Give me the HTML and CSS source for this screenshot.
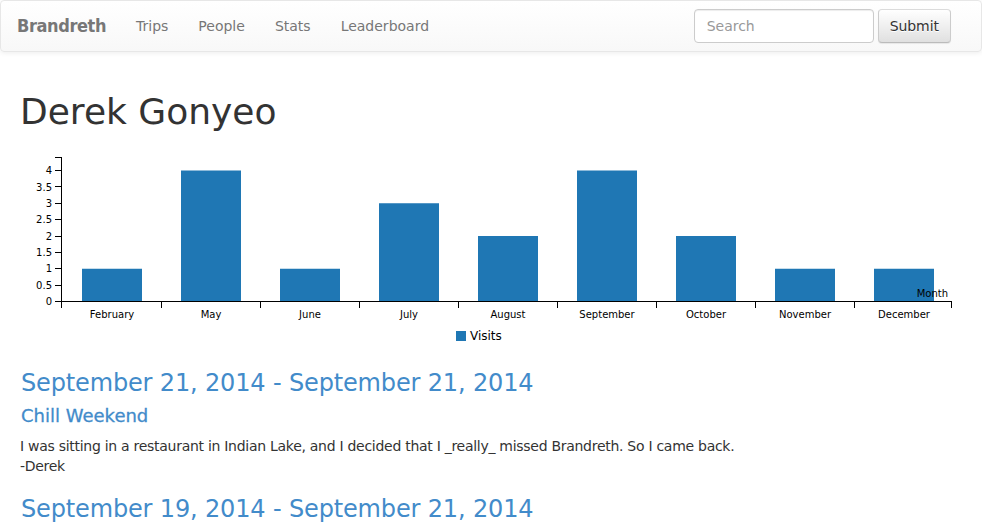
FILE: index.html
```html
<!DOCTYPE html>
<html>
<head>
<meta charset="utf-8">
<title>Derek Gonyeo</title>
<link rel="stylesheet" href="styles.css">
</head>
<body>
<nav class="navbar">
  <a class="brand" href="#">Brandreth</a>
  <ul class="nav">
    <li><a href="#">Trips</a></li>
    <li><a href="#">People</a></li>
    <li><a href="#">Stats</a></li>
    <li><a href="#">Leaderboard</a></li>
  </ul>
  <form class="search">
    <input class="search-input" type="text" placeholder="Search">
    <button class="btn" type="button">Submit</button>
  </form>
</nav>
<main class="content">
  <h1 class="title">Derek Gonyeo</h1>
  <svg class="chart" width="942" height="208" viewBox="0 0 942 208">
    <g class="bars" fill="#1f77b4">
      <rect x="62" y="126.75" width="60" height="32.75"/>
      <rect x="161" y="28.5" width="60" height="131"/>
      <rect x="260" y="126.75" width="60" height="32.75"/>
      <rect x="359" y="61.25" width="60" height="98.25"/>
      <rect x="458" y="94" width="60" height="65.5"/>
      <rect x="557" y="28.5" width="60" height="131"/>
      <rect x="656" y="94" width="60" height="65.5"/>
      <rect x="755" y="126.75" width="60" height="32.75"/>
      <rect x="854" y="126.75" width="60" height="32.75"/>
    </g>
    <g class="axis" stroke="#000" fill="none" shape-rendering="crispEdges">
      <path d="M35,15.5H41.5V159.5H35"/>
      <path d="M35,143.1H41M35,126.75H41M35,110.4H41M35,94H41M35,77.6H41M35,61.25H41M35,44.9H41M35,28.5H41"/>
      <path d="M41.5,166V159.5H931.5V166"/>
      <path d="M141.5,159.5V166M240.5,159.5V166M339.5,159.5V166M438.5,159.5V166M537.5,159.5V166M636.5,159.5V166M735.5,159.5V166M834.5,159.5V166"/>
    </g>
    <g class="ylabels" text-anchor="end">
      <text x="32" y="163">0</text>
      <text x="32" y="146.7">0.5</text>
      <text x="32" y="130.3">1</text>
      <text x="32" y="114">1.5</text>
      <text x="32" y="97.6">2</text>
      <text x="32" y="81.2">2.5</text>
      <text x="32" y="64.9">3</text>
      <text x="32" y="48.5">3.5</text>
      <text x="32" y="32.1">4</text>
    </g>
    <g class="xlabels" text-anchor="middle">
      <text x="92" y="176">February</text>
      <text x="191" y="176">May</text>
      <text x="290" y="176">June</text>
      <text x="389" y="176">July</text>
      <text x="488" y="176">August</text>
      <text x="587" y="176">September</text>
      <text x="686" y="176">October</text>
      <text x="785" y="176">November</text>
      <text x="884" y="176">December</text>
    </g>
    <text class="axis-title" x="928" y="155" text-anchor="end">Month</text>
    <rect x="436" y="189" width="10" height="10" fill="#1f77b4"/>
    <text class="legend" x="450" y="198">Visits</text>
  </svg>

  <h3 class="trip-date"><a href="#">September 21, 2014 - September 21, 2014</a></h3>
  <h4 class="trip-name"><a href="#">Chill Weekend</a></h4>
  <p class="trip-notes">I was sitting in a restaurant in Indian Lake, and I decided that I _really_ missed Brandreth. So I came back.<br>-Derek</p>

  <h3 class="trip-date"><a href="#">September 19, 2014 - September 21, 2014</a></h3>
</main>
</body>
</html>
```

FILE: styles.css
```css
html, body {
  margin: 0;
  padding: 0;
}
body {
  font-family: "DejaVu Sans", sans-serif;
  font-size: 14px;
  line-height: 20px;
  color: #333;
  background: #fff;
}
a {
  color: #428bca;
  text-decoration: none;
}
.navbar {
  display: flex;
  align-items: flex-start;
  height: 50px;
  padding: 0 15px 0 0;
  margin: 0 0 20px 0;
  border: 1px solid #e7e7e7;
  border-radius: 4px;
  background-image: linear-gradient(to bottom, #fff 0, #f8f8f8 100%);
  box-shadow: inset 0 1px 0 rgba(255,255,255,.15), 0 1px 5px rgba(0,0,0,.075);
}
.brand {
  display: block;
  padding: 15px 15px 15px 16px;
  font-family: "DejaVu Sans Condensed", "DejaVu Sans", sans-serif;
  font-weight: bold;
  font-size: 18px;
  line-height: 20px;
  height: 20px;
  letter-spacing: -0.4px;
  color: #777;
}
.nav {
  display: flex;
  list-style: none;
  margin: 0;
  padding: 0;
}
.nav a {
  display: block;
  padding: 15px;
  line-height: 20px;
  color: #777;
  font-size: 14px;
}
.search {
  margin: 8px 0 0 auto;
  padding: 0 15px;
  display: flex;
  gap: 4px;
}
.search-input {
  box-sizing: border-box;
  width: 180px;
  height: 34px;
  padding: 6px 12px;
  font-family: "DejaVu Sans", sans-serif;
  font-size: 14px;
  color: #555;
  background: #fff;
  border: 1px solid #ccc;
  border-radius: 4px;
  box-shadow: inset 0 1px 1px rgba(0,0,0,.075);
  outline: none;
}
.search-input::placeholder {
  color: #999;
}
.btn {
  box-sizing: border-box;
  height: 34px;
  padding: 6px 11px;
  font-family: "DejaVu Sans", sans-serif;
  font-size: 14px;
  line-height: 20px;
  letter-spacing: -0.05px;
  color: #333;
  border: 1px solid #ccc;
  border-color: #dbdbdb #ccc #bbb;
  border-radius: 4px;
  background-image: linear-gradient(to bottom, #fff 0, #e0e0e0 100%);
  text-shadow: 0 1px 0 #fff;
  box-shadow: inset 0 1px 0 rgba(255,255,255,.15), 0 1px 1px rgba(0,0,0,.075);
}
.content {
  display: flow-root;
  padding: 0 20px;
}
.title {
  font-size: 36px;
  font-weight: 500;
  line-height: 1.1;
  margin: 20px 0 10px;
}
.chart {
  display: block;
}
.chart text {
  font-family: "DejaVu Sans", sans-serif;
  font-size: 10px;
  fill: #000;
}
.chart .legend {
  font-size: 12px;
}
.trip-date {
  font-size: 24px;
  font-weight: 500;
  line-height: 1.1;
  letter-spacing: -0.15px;
  margin: 20px 0 10px 1px;
}
.trip-name {
  font-size: 18px;
  font-weight: 500;
  line-height: 1.1;
  margin: 10px 0 10px 1px;
  -webkit-text-stroke: 0.3px #428bca;
}
.trip-notes {
  margin: 0 0 10px;
  letter-spacing: -0.28px;
}
```
